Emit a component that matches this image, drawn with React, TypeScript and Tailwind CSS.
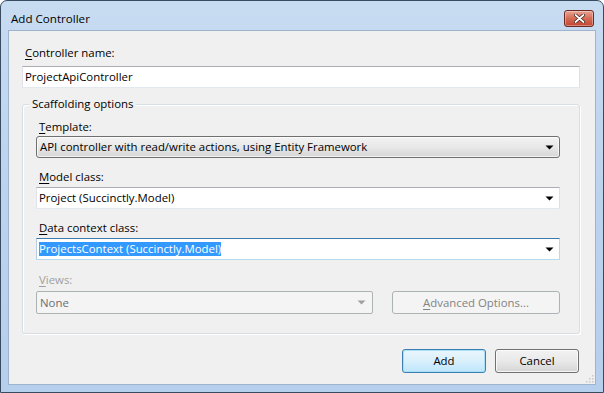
import { ReactNode } from "react";

function Arrow({ disabled }: { disabled?: boolean }) {
  return (
    <svg width="9" height="5" viewBox="0 0 9 5" className="shrink-0">
      <path d="M0.5 0.5h8L4.5 4.5z" fill={disabled ? "#a0a0a0" : "#000"} />
    </svg>
  );
}

function Label({ k, rest, disabled }: { k: string; rest: string; disabled?: boolean }) {
  return (
    <div className={`h-[15px] leading-[15px] pl-[3px] ${disabled ? "text-[#a0a0a0]" : "text-black"}`}>
      <span className="underline underline-offset-[2px] decoration-1">{k}</span>
      {rest}
    </div>
  );
}

function EditCombo({ children, focused }: { children: ReactNode; focused?: boolean }) {
  return (
    <div
      className={`h-[22px] flex items-center bg-white border pl-[2px] pr-[5px] ${
        focused
          ? "border-[#3d7bad] border-b-[#b7d9ed] border-r-[#b7d9ed] border-l-[#b5cfe7]"
          : "border-[#abadb3] border-b-[#e3e9ef] border-l-[#e2e3ea] border-r-[#dbdfe6]"
      }`}
    >
      <div className="flex-1">{children}</div>
      <Arrow />
    </div>
  );
}

export default function App() {
  return (
    <div className="w-[604px] h-[393px] flex flex-col rounded-t-[7px] border border-[#394b60] bg-linear-to-b from-[#c7dbf1] via-[#bcd3ee] to-[#b6cfec] font-['Open_Sans',sans-serif] text-[11.4px] text-black overflow-hidden">
      {/* title bar */}
      <div className="h-[29px] shrink-0 flex items-center pt-[6px] pl-[10px] pr-[9px]">
        <div className="flex-1 text-[11.6px]">Add Controller</div>
        <div className="w-[30px] h-[17px] rounded-[3px] border border-[#6b2a22] bg-linear-to-b from-[#e8a493] via-[#d46b55] to-[#c24230] shadow-[inset_0_0_0_1px_rgba(255,255,255,0.35)] flex items-center justify-center">
          <svg width="11" height="9" viewBox="0 0 11 9">
            <path d="M1.5 1l8 7M9.5 1l-8 7" stroke="#3a1a14" strokeWidth="3.2" strokeLinecap="round" />
            <path d="M1.5 1l8 7M9.5 1l-8 7" stroke="#fff" strokeWidth="1.8" strokeLinecap="round" />
          </svg>
        </div>
      </div>

      {/* client area */}
      <div className="flex-1 mx-[7px] mb-[7px] bg-[#f0f0f0] border border-[#9eb4cd] flex flex-col pt-[14px] pl-[13px] pr-[15px] relative">
        <Label k="C" rest="ontroller name:" />
        <div className="mt-[6px] h-[22px] flex items-center bg-white border border-[#abadb3] border-b-[#e3e9ef] border-l-[#e2e3ea] border-r-[#dbdfe6] pl-[2px]">
          ProjectApiController
        </div>

        {/* group box */}
        <div className="relative mt-[16px] h-[230px] rounded-[3px] border border-[#d5dfe5] shadow-[inset_1px_1px_0_#fff,1px_1px_0_#fff] flex flex-col pt-[14px] pl-[13px] pr-[19px]">
          <div className="absolute -top-[9px] left-[6px] px-[3px] bg-[#f0f0f0] leading-[15px]">
            Scaffolding options
          </div>

          <Label k="T" rest="emplate:" />
          <div className="mt-[2px] h-[22px] flex items-center rounded-[3px] border border-[#707070] bg-linear-to-b from-[#f3f3f3] via-[#e8e8e8] to-[#d6d6d6] shadow-[inset_0_0_0_1px_rgba(255,255,255,0.7)] pl-[3px] pr-[5px]">
            <div className="flex-1">API controller with read/write actions, using Entity Framework</div>
            <Arrow />
          </div>

          <div className="mt-[11px]">
            <Label k="M" rest="odel class:" />
          </div>
          <div className="mt-[3px]">
            <EditCombo>Project (Succinctly.Model)</EditCombo>
          </div>

          <div className="mt-[11px]">
            <Label k="D" rest="ata context class:" />
          </div>
          <div className="mt-[3px]">
            <EditCombo focused>
              <span className="bg-[#3399ff] text-white leading-[14px] inline-block">ProjectsContext (Succinctly.Model)</span>
            </EditCombo>
          </div>

          <div className="mt-[12px]">
            <Label k="V" rest="iews:" disabled />
          </div>
          <div className="mt-[4px] flex">
            <div className="w-[337px] h-[23px] flex items-center rounded-[2px] border border-[#adb2b5] bg-[#f4f4f4] pl-[3px] pr-[6px] text-[#6d6d6d]">
              <div className="flex-1">None</div>
              <Arrow disabled />
            </div>
            <div className="ml-[19px] flex-1 h-[23px] flex items-center justify-center rounded-[3px] border border-[#adb2b5] bg-[#f4f4f4] text-[#838383]">
              <span>
                <span className="underline underline-offset-[2px] decoration-1">A</span>dvanced Options...
              </span>
            </div>
          </div>
        </div>

        {/* buttons */}
        <div className="mt-[15px] flex justify-end gap-[9px] pr-[1px]">
          <div className="w-[84px] h-[24px] flex items-center justify-center rounded-[3px] border border-[#3c7fb1] bg-linear-to-b from-[#eaf6fd] via-[#d9f0fc] to-[#bee6fd] shadow-[inset_0_0_0_1px_#a8def6]">
            Add
          </div>
          <div className="w-[84px] h-[24px] flex items-center justify-center rounded-[3px] border border-[#707070] bg-linear-to-b from-[#f2f2f2] via-[#e9e9e9] to-[#d5d5d5] shadow-[inset_0_0_0_1px_rgba(255,255,255,0.75)]">
            Cancel
          </div>
        </div>

        {/* resize grip */}
        <svg width="8" height="8" viewBox="0 0 8 8" className="absolute right-[1px] bottom-[1px]">
          <g fill="#c7c7c7">
            <rect x="6" y="0" width="1.5" height="1.5" />
            <rect x="3" y="3" width="1.5" height="1.5" />
            <rect x="6" y="3" width="1.5" height="1.5" />
            <rect x="0" y="6" width="1.5" height="1.5" />
            <rect x="3" y="6" width="1.5" height="1.5" />
            <rect x="6" y="6" width="1.5" height="1.5" />
          </g>
        </svg>
      </div>
    </div>
  );
}
